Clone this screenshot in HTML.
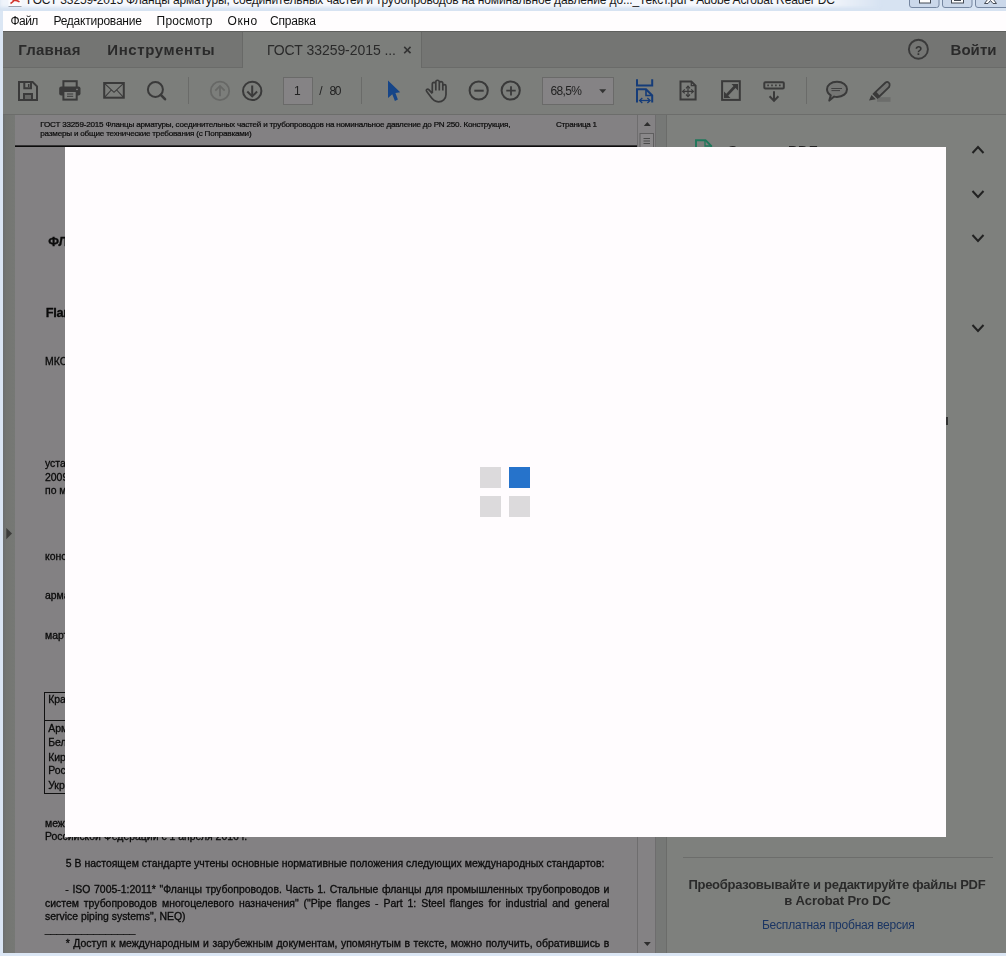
<!DOCTYPE html>
<html lang="ru"><head><meta charset="utf-8"><title>ГОСТ 33259-2015</title>
<style>
*{box-sizing:border-box;margin:0;padding:0}
html,body{width:1006px;height:956px;overflow:hidden;background:#dbe6f4;font-family:"Liberation Sans",sans-serif;}
.abs{position:absolute}
.t{position:absolute;white-space:nowrap;line-height:1}
#win{position:absolute;left:0;top:0;width:1006px;height:956px;overflow:hidden;background:#dbe6f4}
#title{left:0;top:0;width:1006px;height:11px;background:#d7e3f2;overflow:hidden}
#glow{left:0;top:-4px;width:880px;height:11px;background:linear-gradient(90deg,#eef3fa 0,#f6f8fc 30px,#f6f8fc 820px,#d7e3f2 880px);}
#menu{left:3px;top:11px;width:1003px;height:20px;background:#fffdfe}
#tabs{left:3px;top:31px;width:1003px;height:37px;background:#747573;border-top:1px solid #5f605e;border-bottom:1px solid #6a6b69}
#atab{position:absolute;left:239px;top:0;width:180px;height:36px;background:#7c7e7b;border-left:1px solid #686967;border-right:1px solid #686967}
#tool{left:3px;top:68px;width:1003px;height:47px;background:#7c7e7b;border-bottom:1px solid #6c6d6b}
#doc{left:15px;top:115px;width:622px;height:838px;background:#838183;overflow:hidden}
#nav{left:3px;top:115px;width:12px;height:838px;background:linear-gradient(90deg,#6c6f70 0,#747672 3px,#767875 12px)}
#sb{left:637px;top:115px;width:19px;height:838px;background:#848284;border-left:1px solid #6e6d6e;border-right:1px solid #6e6d6e}
#split{left:656px;top:115px;width:11px;height:838px;background:#767876;border-right:1px solid #6b6c6a}
#right{left:667px;top:115px;width:339px;height:838px;background:#7e807d}
#modal{left:65px;top:147px;width:881px;height:690px;background:#fffcfe}
.sq{position:absolute;width:21px;height:21px;background:#dcdadc}
.sep{position:absolute;top:77px;width:1px;height:27px;background:#6b6c6a}
</style></head><body>
<div id="win">
<div id="title" class="abs"><div id="glow" class="abs" style="filter:blur(1.5px)"></div><span class="t" style="left:27.00px;top:-5.56px;font-size:12px;color:#1a1a1a;letter-spacing:-0.149px;">ГОСТ 33259-2015 Фланцы арматуры, соединительных частей и трубопроводов на номинальное давление до..._Текст.pdf - Adobe Acrobat Reader DC</span></div><div id="menu" class="abs"></div><div id="tabs" class="abs"><div id="atab"></div></div><div id="tool" class="abs"></div><div id="nav" class="abs"></div><div id="doc" class="abs"></div><div id="sb" class="abs"></div><div id="split" class="abs"></div><div id="right" class="abs"></div><div id="txt" class="abs" style="left:0;top:0;width:1006px;height:956px;will-change:transform"><span class="t" style="left:10.50px;top:14.84px;font-size:12px;color:#111;letter-spacing:-0.567px;">Файл</span><span class="t" style="left:53.40px;top:14.84px;font-size:12px;color:#111;letter-spacing:-0.224px;">Редактирование</span><span class="t" style="left:156.60px;top:14.84px;font-size:12px;color:#111;letter-spacing:0.157px;">Просмотр</span><span class="t" style="left:227.60px;top:14.84px;font-size:12px;color:#111;letter-spacing:0.538px;">Окно</span><span class="t" style="left:270.00px;top:14.84px;font-size:12px;color:#111;letter-spacing:-0.179px;">Справка</span><span class="t" style="left:18.30px;top:42.00px;font-size:15px;color:#2a2a2a;font-weight:bold;letter-spacing:0.183px;">Главная</span><span class="t" style="left:107.30px;top:42.00px;font-size:15px;color:#2a2a2a;font-weight:bold;letter-spacing:0.591px;">Инструменты</span><span class="t" style="left:267.00px;top:42.85px;font-size:14px;color:#2a2a2a;letter-spacing:-0.059px;">ГОСТ 33259-2015 ...</span><span class="t" style="left:403.00px;top:42.30px;font-size:15px;color:#333;font-weight:bold;">×</span><span class="t" style="left:950.50px;top:41.90px;font-size:15px;color:#2a2a2a;font-weight:bold;letter-spacing:0.054px;">Войти</span><span class="t" style="left:914.90px;top:44.84px;font-size:12px;color:#333;font-weight:bold;">?</span><div class="abs" style="left:283px;top:77px;width:30px;height:28px;background:#858385;border:1px solid #6a6a69"></div><div class="abs" style="left:542px;top:77px;width:72px;height:28px;background:#858385;border:1px solid #6a6a69"></div><span class="t" style="left:294.00px;top:84.64px;font-size:12px;color:#222;">1</span><span class="t" style="left:319.20px;top:84.64px;font-size:12px;color:#222;">/</span><span class="t" style="left:329.50px;top:84.64px;font-size:12px;color:#222;letter-spacing:-1.348px;">80</span><span class="t" style="left:550.50px;top:84.64px;font-size:12px;color:#222;letter-spacing:-0.631px;">68,5%</span><span class="t" style="left:40.30px;top:121.34px;font-size:8.1px;color:#0a0a0a;letter-spacing:-0.210px;-webkit-text-stroke:0.2px #0a0a0a;">ГОСТ 33259-2015 Фланцы арматуры, соединительных частей и трубопроводов на номинальное давление до PN 250. Конструкция,</span><span class="t" style="left:40.30px;top:130.34px;font-size:8.1px;color:#0a0a0a;letter-spacing:-0.200px;-webkit-text-stroke:0.2px #0a0a0a;">размеры и общие технические требования (с Поправками)</span><span class="t" style="left:556.00px;top:121.34px;font-size:8.1px;color:#0a0a0a;letter-spacing:-0.274px;-webkit-text-stroke:0.2px #0a0a0a;">Страница 1</span><div class="abs" style="left:15px;top:145px;width:622px;height:2px;background:linear-gradient(#343334 0,#343334 1px,#0c0c0c 1px)"></div><span class="t" style="left:48.30px;top:235.73px;font-size:12.6px;color:#0a0a0a;font-weight:bold;-webkit-text-stroke:0.3px #0a0a0a;">ФЛАНЦЫ</span><span class="t" style="left:45.80px;top:307.16px;font-size:12.8px;color:#0a0a0a;font-weight:bold;letter-spacing:-0.35px;-webkit-text-stroke:0.3px #0a0a0a;">Flanges</span><span class="t" style="left:45.00px;top:356.75px;font-size:10.45px;color:#0a0a0a;-webkit-text-stroke:0.3px #0a0a0a;">МКС 23.040.60</span><span class="t" style="left:45.00px;top:459.15px;font-size:10.45px;color:#0a0a0a;-webkit-text-stroke:0.3px #0a0a0a;">установлены</span><span class="t" style="left:45.00px;top:472.65px;font-size:10.45px;color:#0a0a0a;-webkit-text-stroke:0.3px #0a0a0a;">2009 г.</span><span class="t" style="left:45.00px;top:486.15px;font-size:10.45px;color:#0a0a0a;-webkit-text-stroke:0.3px #0a0a0a;">по межгосударственной</span><span class="t" style="left:45.00px;top:552.15px;font-size:10.45px;color:#0a0a0a;-webkit-text-stroke:0.3px #0a0a0a;">конструкции</span><span class="t" style="left:45.00px;top:590.85px;font-size:10.45px;color:#0a0a0a;-webkit-text-stroke:0.3px #0a0a0a;">арматуры</span><span class="t" style="left:45.00px;top:631.05px;font-size:10.45px;color:#0a0a0a;-webkit-text-stroke:0.3px #0a0a0a;">марта 2016 г.</span><span class="t" style="left:45.00px;top:818.55px;font-size:10.45px;color:#0a0a0a;-webkit-text-stroke:0.3px #0a0a0a;">межгосударственного</span><div class="abs" style="left:44px;top:692px;width:560px;height:102px;border:1px solid #111"></div><div class="abs" style="left:44px;top:720px;width:560px;height:1px;background:#111"></div><span class="t" style="left:48.20px;top:695.15px;font-size:10.45px;color:#0a0a0a;-webkit-text-stroke:0.3px #0a0a0a;">Краткое наименование</span><span class="t" style="left:48.20px;top:723.75px;font-size:10.45px;color:#0a0a0a;-webkit-text-stroke:0.3px #0a0a0a;">Армения</span><span class="t" style="left:48.20px;top:737.95px;font-size:10.45px;color:#0a0a0a;-webkit-text-stroke:0.3px #0a0a0a;">Беларусь</span><span class="t" style="left:48.20px;top:752.55px;font-size:10.45px;color:#0a0a0a;-webkit-text-stroke:0.3px #0a0a0a;">Киргизия</span><span class="t" style="left:48.20px;top:766.45px;font-size:10.45px;color:#0a0a0a;-webkit-text-stroke:0.3px #0a0a0a;">Россия</span><span class="t" style="left:48.20px;top:781.15px;font-size:10.45px;color:#0a0a0a;-webkit-text-stroke:0.3px #0a0a0a;">Украина</span><span class="t" style="left:45.00px;top:831.55px;font-size:10.45px;color:#0a0a0a;-webkit-text-stroke:0.3px #0a0a0a;">Российской Федерации с 1 апреля 2016 г.</span><span class="t" style="left:65.80px;top:858.65px;font-size:10.45px;color:#0a0a0a;letter-spacing:0.008px;-webkit-text-stroke:0.3px #0a0a0a;">5 В настоящем стандарте учтены основные нормативные положения следующих международных стандартов:</span><span class="t" style="left:65.30px;top:885.15px;font-size:10.45px;color:#0a0a0a;word-spacing:0.738px;-webkit-text-stroke:0.3px #0a0a0a;">- ISO 7005-1:2011* "Фланцы трубопроводов. Часть 1. Стальные фланцы для промышленных трубопроводов и</span><span class="t" style="left:45.00px;top:898.65px;font-size:10.45px;color:#0a0a0a;word-spacing:2.010px;-webkit-text-stroke:0.3px #0a0a0a;">систем трубопроводов многоцелевого назначения" ("Pipe flanges - Part 1: Steel flanges for industrial and general</span><span class="t" style="left:45.00px;top:912.15px;font-size:10.45px;color:#0a0a0a;-webkit-text-stroke:0.3px #0a0a0a;">service piping systems", NEQ)</span><span class="t" style="left:45.00px;top:924.75px;font-size:10.45px;color:#2a2a2a;letter-spacing:0.237px;-webkit-text-stroke:0.3px #0a0a0a;">_______________</span><span class="t" style="left:65.80px;top:939.15px;font-size:10.45px;color:#0a0a0a;word-spacing:0.611px;-webkit-text-stroke:0.3px #0a0a0a;">* Доступ к международным и зарубежным документам, упомянутым в тексте, можно получить, обратившись в</span><span class="t" style="left:727.60px;top:142.80px;font-size:15px;color:#222;letter-spacing:-0.053px;">Экспорт PDF</span><div class="abs" style="left:683px;top:857px;width:310px;height:1px;background:#6c6d6b"></div><span class="t" style="left:688.40px;top:878.40px;font-size:13px;color:#2a2a2a;font-weight:bold;letter-spacing:-0.273px;">Преобразовывайте и редактируйте файлы PDF</span><span class="t" style="left:784.20px;top:894.00px;font-size:13px;color:#2a2a2a;font-weight:bold;letter-spacing:-0.106px;">в Acrobat Pro DC</span><span class="t" style="left:761.90px;top:919.34px;font-size:12px;color:#1b3563;letter-spacing:-0.201px;">Бесплатная пробная версия</span><div class="abs" style="left:946px;top:417px;width:2px;height:8px;background:#333"></div></div><svg class="abs" style="left:0;top:0" width="1006" height="956" viewBox="0 0 1006 956" fill="none" stroke="#3a3a3a" stroke-width="2">
<!-- pdf app icon in title bar -->
<g stroke="none"><rect x="8.5" y="-8" width="13" height="14.500" fill="#fbfbfd"/><rect x="8.500" y="6" width="13" height="1" fill="#9aa3b0"/><path d="M10.500,3.500 C13,2 15,0 16,-3 M12.500,0.500 C15,0 17.500,0.500 19.500,2" stroke="#d2342c" stroke-width="1.500" fill="none"/></g>
<!-- window buttons -->
<g stroke="#7687a1" stroke-width="1" fill="#cbd8ea">
<path d="M909.5,-1 V5 a2.5,2.5 0 0 0 2.5,2.5 H936.5 a2.5,2.5 0 0 0 2.500,-2.5 V-1"/>
<path d="M942.5,-1 V5 a2.5,2.5 0 0 0 2.5,2.5 H969.5 a2.5,2.5 0 0 0 2.500,-2.5 V-1"/>
<path d="M975.5,-1 V5 a2.5,2.5 0 0 0 2.5,2.5 H1007 V-1"/>
</g>
<g stroke="#454b55" stroke-width="1" fill="#fdfdfd">
<rect x="919.5" y="-3" width="11" height="6"/>
<rect x="951.5" y="-3" width="12" height="6"/><rect x="954.5" y="-3" width="6" height="3.500" fill="#8d9bb0" stroke="#454b55"/>
<path d="M984.5,3.5 L988,-1 H993 L996.500,3.5 H993 L990.500,0.500 L988,3.500 Z"/>
</g>
<!-- help -->
<circle cx="918.4" cy="49.2" r="9.5" stroke-width="1.9"/>
<!-- save -->
<path d="M19,82 H32.600 L37,86.400 V100 H19 Z"/>
<path d="M24.300,82 V88.200 H31 V82" />
<path d="M28.700,84 V87" stroke-width="1.5"/>
<path d="M24,100 V94 H32 V100 Z" fill="#666765"/>
<!-- printer -->
<rect x="63.400" y="81.200" width="13.300" height="7"/>
<rect x="59.200" y="86.500" width="21.300" height="9" rx="2" fill="#3a3a3a" stroke="none"/>
<rect x="63.400" y="91" width="13.300" height="8.600" fill="#7f807e"/>
<path d="M67,94 H73.200 M67,96.300 H73.200" stroke-width="1"/>
<rect x="76.300" y="88.800" width="1.400" height="1.300" fill="#8a8a8a" stroke="none"/>
<!-- mail -->
<rect x="104.200" y="83" width="19.600" height="14.700"/>
<path d="M104.500,83.300 L114,92.300 L123.500,83.300 M104.500,97.400 L111.300,90 M123.500,97.400 L116.700,90" stroke-width="1.100"/>
<!-- search -->
<circle cx="155.400" cy="89.500" r="7.500"/>
<path d="M160.800,94.900 L165,99.200" stroke-width="2.600" stroke-linecap="round"/>
<!-- up (disabled) -->
<g stroke="#676866" stroke-width="1.800"><circle cx="220" cy="90.900" r="9.200"/><path d="M220,96.300 V86 M215.300,90.600 L220,85.900 L224.700,90.600"/></g>
<!-- down -->
<circle cx="252.200" cy="90.900" r="9.200"/><path d="M252.200,85.500 V96 M247.300,91.500 L252.200,96.400 L257.100,91.500"/>
<!-- page box / zoom box -->
<path d="M599.200,89.200 H606.200 L602.700,93.300 Z" fill="#333" stroke="none"/>
<!-- cursor arrow -->
<path d="M388,80.600 L400.200,92.200 L395.400,92.900 L397.900,99.600 L394.900,100.900 L392.300,94.300 L388,98 Z" fill="#164588" stroke="none"/>
<!-- hand -->
<path d="M432.300,93 V84.200 A1.750,1.750 0 0 1 435.800,84.200 V90.500 M435.800,84.200 V82 A1.750,1.750 0 0 1 439.300,82 V90.500 M439.300,83.400 A1.750,1.750 0 0 1 442.800,83.400 V90.500 M442.800,86.200 A1.600,1.600 0 0 1 446,86.200 V94.500 C446,99 442.500,101.800 438.500,101.800 C434.500,101.800 432.500,99.500 430.500,96.500 L426.600,91.200 C425.600,89.800 427.500,88.300 428.800,89.600 L432.300,93.500" stroke-width="1.700" stroke-linejoin="round"/>
<!-- minus / plus -->
<circle cx="478.700" cy="90.500" r="9.100"/><path d="M474.300,90.700 H483.700"/>
<circle cx="510.700" cy="90.500" r="9.100"/><path d="M506.300,90.700 H515.700 M511,86.200 V95.500" stroke-width="1.800"/>
<!-- fit width (blue) -->
<g stroke="#153c79"><path d="M637,79.200 V85.400 H652.200 V79.200"/><path d="M637,102.600 V89.300 H646 L652.200,95.500 V102.600"/><path d="M646,89.300 V95.500 H652.200" stroke-width="1.600"/><path d="M640,100.500 H649.500" stroke-width="1.300"/><path d="M642.300,98 L639.600,100.500 L642.300,103 M647.400,98 L650.100,100.500 L647.400,103" stroke-width="1.300"/></g>
<!-- fit page -->
<path d="M680.500,81.400 H691.300 L695.600,85.700 V99.600 H680.500 Z"/><path d="M691.300,81.400 V85.700 H695.600" stroke-width="1.300"/>
<path d="M688,86.500 V96.300 M683,91.400 H693" stroke-width="1.200"/>
<path d="M686,88.300 L688,86.100 L690,88.300 M686,94.500 L688,96.700 L690,94.500 M684.800,89.400 L682.600,91.400 L684.800,93.400 M691.200,89.400 L693.400,91.400 L691.200,93.400" stroke-width="1.200"/>
<!-- fullscreen -->
<rect x="722.100" y="81.200" width="17.700" height="18.700"/>
<path d="M727,95 L735,86.500" stroke-width="2.600"/>
<path d="M731.500,84 H738 V90.500 Z M724,91.500 V98 H730.500 Z" fill="#3a3a3a" stroke="none"/>
<!-- keyboard down -->
<rect x="764.300" y="82.200" width="19.500" height="6.400" rx="1"/>
<path d="M767.300,85.400 H768.900 M771.200,85.400 H772.800 M775.100,85.400 H776.700 M779,85.400 H780.600" stroke-width="1.600"/>
<path d="M774,91.200 V100.500 M769.600,96.300 L774,100.900 L778.400,96.300"/>
<!-- separators -->
<g stroke="#6a6b69" stroke-width="1"><path d="M188.500,77 V104 M361.500,77 V104 M806.500,77 V104"/></g>
<!-- comment -->
<path d="M837,81.800 C843,81.800 847,85.200 847,89.300 C847,93.400 843,96.900 837,96.900 C836,96.900 835,96.800 834.200,96.600 L829.300,100.600 L830.800,95.300 C828.400,93.900 827,91.800 827,89.300 C827,85.200 831,81.800 837,81.800 Z" fill="#757674" stroke-linejoin="round"/>
<path d="M831.300,88.500 H842 M831.500,90.600 H840" stroke-width="0.900"/>
<!-- highlighter -->
<rect x="877" y="97.200" width="13.500" height="4.600" fill="#6c6d6b" stroke="none"/>
<path d="M875.400,92.200 L885.600,82.500 C887.500,81 890.200,82.800 889.600,85.200 L889,87.200 L879.300,96.500 Z" fill="#727371" stroke-width="1.800" stroke-linejoin="round"/>
<path d="M874.500,91.800 L879.800,97 L877.500,99 L872.400,94 Z" fill="#3a3a3a" stroke="none"/>
<path d="M871.500,95 L875.800,99.300 L869,100.500 Z" fill="#3a3a3a" stroke="none"/>
<!-- nav pane triangle -->
<path d="M6.300,528 L12,533.600 L6.300,539.200 Z" fill="#3d3d3b" stroke="none"/>
<!-- scrollbar -->
<g stroke="none" fill="#2e2e2e"><path d="M643.8,126 L647.3,122 L650.8,126 Z"/><path d="M643.8,942 L647.3,946 L650.8,942 Z"/></g>
<rect x="640" y="133.500" width="13.500" height="20" fill="#8a888a" stroke="#5f5e5f" stroke-width="1"/>
<path d="M643.500,138.500 H650 M643.500,141 H650 M643.500,143.500 H650" stroke="#4a4a4a" stroke-width="1"/>
<!-- right panel: export icon + chevrons -->
<path d="M696,147 V140.200 H705.500 L711.200,146 V147" stroke="#1f775b" stroke-width="1.900"/>
<path d="M705,140.500 V146 H711" stroke="#1f775b" stroke-width="1.300"/>
<g stroke="#222" stroke-width="2"><path d="M972.500,153 L978,147 L983.500,153"/><path d="M972.500,191 L978,197 L983.500,191"/><path d="M972.500,235 L978,241 L983.500,235"/><path d="M972.500,325 L978,331 L983.500,325"/></g>
</svg>
<div id="modal" class="abs">
<div class="sq" style="left:415px;top:320px"></div>
<div class="sq" style="left:444px;top:320px;background:#2673cb"></div>
<div class="sq" style="left:415px;top:349px"></div>
<div class="sq" style="left:444px;top:349px"></div>
</div>
<div class="abs" style="left:0;top:953px;width:1006px;height:3px;background:#dbe6f4"></div>
</div>
</body></html>
